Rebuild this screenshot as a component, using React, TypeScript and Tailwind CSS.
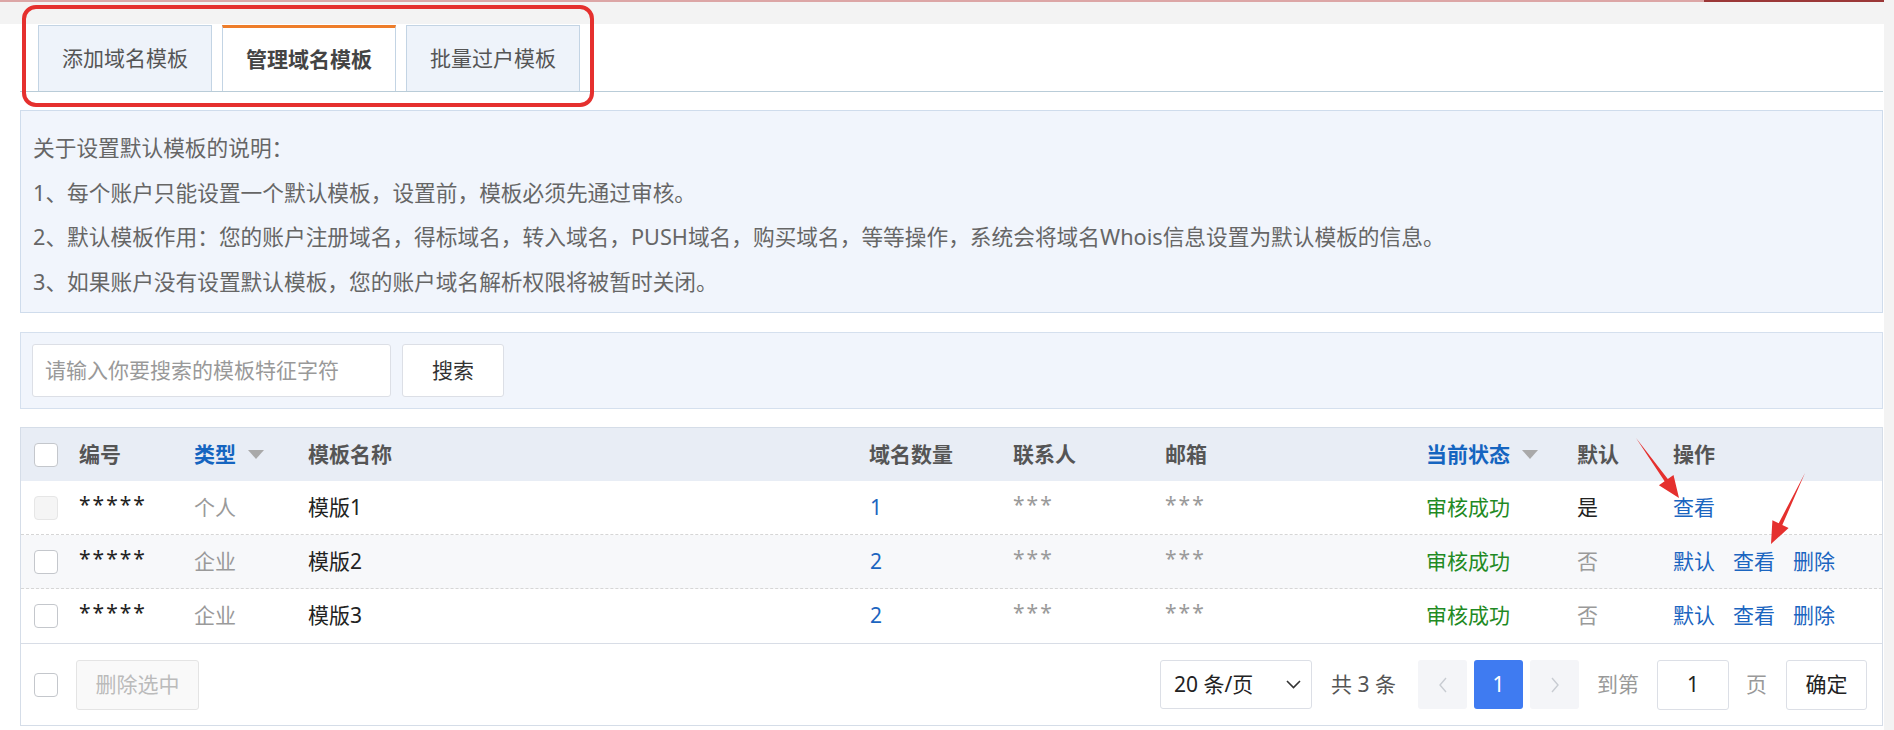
import React from "react";

const cols = "grid grid-cols-[58px_115px_114px_561px_144px_152px_261px_151px_96px_1fr] items-center";

const rows = [
	{ type: "个人", name: "模版1", count: "1", def: "是", isDefault: true },
	{ type: "企业", name: "模版2", count: "2", def: "否", isDefault: false },
	{ type: "企业", name: "模版3", count: "2", def: "否", isDefault: false },
];

function Checkbox({ disabled }: { disabled?: boolean }) {
	return (
		<div
			className={
				disabled
					? "w-[24px] h-[24px] rounded-[4px] border border-[#e6e6e6] bg-[#f5f5f5]"
					: "w-[24px] h-[24px] rounded-[4px] border border-[#c4c7cc] bg-white"
			}
		/>
	);
}

function SortCaret() {
	return (
		<svg width="16" height="9" viewBox="0 0 16 9" className="ml-[12px]">
			<polygon points="0,0 16,0 8,9" fill="#a9a9a9" />
		</svg>
	);
}

export default function App() {
	return (
		<div className="relative w-[1894px] h-[730px] overflow-hidden bg-[#f3f3f3] font-['Noto_Sans','Noto_Sans_CJK_SC',sans-serif]">
			<div className="flex h-[2px]">
				<div className="flex-1 bg-[#dca6a6]" />
				<div className="w-[180px] bg-[#9b3737]" />
				<div className="w-[10px]" />
			</div>

			<div className="w-[1884px] h-[706px] mt-[22px] bg-white pl-[20px] pr-px">
				{/* tabs */}
				<div className="flex items-end gap-[10px] pl-[18px] h-[68px] border-b border-[#b9ccd8]">
					<div className="w-[174px] h-[66px] flex items-center justify-center border border-b-0 border-[#c3d4e4] bg-[#eef3fa] text-[21px] text-[#555]">
						添加域名模板
					</div>
					<div className="w-[174px] h-[66px] flex items-center justify-center border border-b-0 border-t-[3px] border-[#c3d4e4] border-t-[#ee7d2a] bg-white text-[21px] font-bold text-[#444]">
						管理域名模板
					</div>
					<div className="w-[174px] h-[66px] flex items-center justify-center border border-b-0 border-[#c3d4e4] bg-[#eef3fa] text-[21px] text-[#555]">
						批量过户模板
					</div>
				</div>

				{/* notes */}
				<div className="mt-[18px] border border-[#cfdcec] bg-[#f1f5fc] pt-[15px] pb-[8px] pl-[12px] text-[21.7px] leading-[44.5px] text-[#666]">
					<p>关于设置默认模板的说明：</p>
					<p>1、每个账户只能设置一个默认模板，设置前，模板必须先通过审核。</p>
					<p>2、默认模板作用：您的账户注册域名，得标域名，转入域名，PUSH域名，购买域名，等等操作，系统会将域名Whois信息设置为默认模板的信息。</p>
					<p>3、如果账户没有设置默认模板，您的账户域名解析权限将被暂时关闭。</p>
				</div>

				{/* search */}
				<div className="mt-[19px] h-[77px] border border-[#d5e0ee] bg-[#f1f5fc] flex items-center pl-[11px]">
					<div className="w-[359px] h-[53px] rounded-[3px] border border-[#dcdfe6] bg-white flex items-center pl-[12px] text-[21px] text-[#999]">
						请输入你要搜索的模板特征字符
					</div>
					<div className="ml-[11px] w-[102px] h-[53px] rounded-[3px] border border-[#dcdfe6] bg-white flex items-center justify-center text-[21px] text-[#333]">
						搜索
					</div>
				</div>

				{/* table */}
				<div className="mt-[18px] border border-[#d5dde8] text-[21px]">
					<div className={`${cols} h-[53px] bg-[#e8edf5] font-bold text-[#555]`}>
						<div className="pl-[13px]">
							<Checkbox />
						</div>
						<div>编号</div>
						<div className="flex items-center text-[#1565c0]">
							类型
							<SortCaret />
						</div>
						<div>模板名称</div>
						<div>域名数量</div>
						<div>联系人</div>
						<div>邮箱</div>
						<div className="flex items-center text-[#1565c0]">
							当前状态
							<SortCaret />
						</div>
						<div>默认</div>
						<div>操作</div>
					</div>

					{rows.map((r, i) => (
						<div
							key={r.name}
							className={`${cols} h-[54px] ${i === 1 ? "bg-[#f7f8fa]" : "bg-white"} ${
								i < 2 ? "border-b border-dashed border-[#d6d6d6]" : ""
							}`}
						>
							<div className="pl-[13px]">
								<Checkbox disabled={r.isDefault} />
							</div>
							<div className="text-[#222] tracking-[2px] -mt-[6px]">*****</div>
							<div className="text-[#9a9a9a]">{r.type}</div>
							<div className="text-[#222]">{r.name}</div>
							<div className="text-[#1b65c0] pl-px">{r.count}</div>
							<div className="text-[#9a9a9a] tracking-[2px] -mt-[6px]">***</div>
							<div className="text-[#9a9a9a] tracking-[2px] -mt-[6px]">***</div>
							<div className="text-[#1f8a24]">审核成功</div>
							<div className={r.isDefault ? "text-[#222]" : "text-[#9a9a9a]"}>{r.def}</div>
							<div className="flex gap-[18px] text-[#1b65c0]">
								{!r.isDefault && <span>默认</span>}
								<span>查看</span>
								{!r.isDefault && <span>删除</span>}
							</div>
						</div>
					))}

					<div className="h-[82px] border-t border-[#d8dde6] flex items-center justify-between pl-[13px] pr-[15px]">
						<div className="flex items-center">
							<Checkbox />
							<div className="ml-[18px] w-[123px] h-[50px] rounded-[3px] border border-[#e4e4e4] bg-[#f9f9f9] flex items-center justify-center text-[#bbb]">
								删除选中
							</div>
						</div>

						<div className="flex items-center">
							<div className="w-[152px] h-[49px] rounded-[3px] border border-[#dcdfe6] flex items-center justify-between pl-[13px] pr-[10px] text-[#222]">
								<span>20 条/页</span>
								<svg width="15" height="9" viewBox="0 0 15 9">
									<polyline points="1,1 7.5,7.5 14,1" fill="none" stroke="#333" strokeWidth="1.6" />
								</svg>
							</div>
							<span className="ml-[19px] text-[#555]">共 3 条</span>
							<div className="ml-[22px] w-[49px] h-[49px] rounded-[3px] bg-[#f4f5f8] flex items-center justify-center">
								<svg width="10" height="16" viewBox="0 0 10 16">
									<polyline points="8,1 2,8 8,15" fill="none" stroke="#c8ccd2" strokeWidth="1.4" />
								</svg>
							</div>
							<div className="ml-[7px] w-[49px] h-[49px] rounded-[3px] bg-[#3f7bf1] flex items-center justify-center text-white">
								1
							</div>
							<div className="ml-[7px] w-[49px] h-[49px] rounded-[3px] bg-[#f4f5f8] flex items-center justify-center">
								<svg width="10" height="16" viewBox="0 0 10 16">
									<polyline points="2,1 8,8 2,15" fill="none" stroke="#c8ccd2" strokeWidth="1.4" />
								</svg>
							</div>
							<span className="ml-[18px] text-[#999]">到第</span>
							<div className="ml-[18px] w-[72px] h-[50px] rounded-[3px] border border-[#dcdfe6] flex items-center justify-center text-[#222]">
								1
							</div>
							<span className="ml-[17px] text-[#999]">页</span>
							<div className="ml-[19px] w-[81px] h-[50px] rounded-[3px] border border-[#dcdfe6] flex items-center justify-center text-[#222]">
								确定
							</div>
						</div>
					</div>
				</div>
			</div>

			{/* annotations */}
			<div className="absolute left-[22px] top-[5px] w-[572px] h-[102px] rounded-[14px] border-[4px] border-[#e5302e]" />
			<svg className="absolute left-0 top-0 pointer-events-none" width="1894" height="730" viewBox="0 0 1894 730">
				<polygon
					points="1636,438 1667.8,478.9 1673.5,474.9 1679,498 1658.9,485.3 1664.6,481.3"
					fill="#e5302e"
				/>
				<polygon
					points="1805,473 1782.3,525.1 1788.6,528.1 1771,544 1772.4,520.3 1778.7,523.3"
					fill="#e5302e"
				/>
			</svg>
		</div>
	);
}
